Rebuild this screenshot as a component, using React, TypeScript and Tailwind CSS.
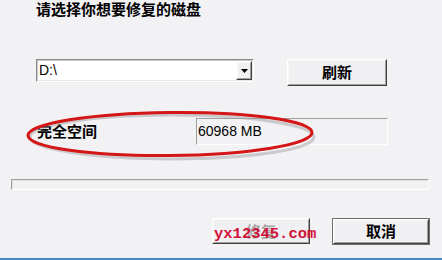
import React from "react";

const cjk = "font-['SimSun','Noto_Sans_CJK_SC',sans-serif]";

function Raised({ children, className = "" }: { children?: React.ReactNode; className?: string }) {
  return (
    <div
      className={`border border-t-white border-l-white border-b-[#404040] border-r-[#404040] bg-[#f0eff2] ${className}`}
    >
      <div className="w-full h-full border border-t-[#f7f7f7] border-l-[#f7f7f7] border-b-[#a0a0a0] border-r-[#a0a0a0] flex items-center justify-center">
        {children}
      </div>
    </div>
  );
}

export default function App() {
  return (
    <div className={`relative w-[442px] h-[260px] bg-[#f2f1f4] overflow-hidden flex flex-col ${cjk}`}>
      <div className="pl-[36px] h-[16px] text-[15px] leading-[17px] font-bold text-black">
        请选择你想要修复的磁盘
      </div>

      <div className="mt-[43px] flex items-start pl-[36px]">
        <div className="w-[218px] h-[23px] border border-t-[#8a8a8a] border-l-[#8a8a8a] border-b-white border-r-white">
          <div className="w-full h-full border border-t-[#c8c8c8] border-l-[#c8c8c8] border-b-[#e8e8e8] border-r-[#e8e8e8] bg-white flex items-center">
            <span className="pl-[1px] text-[14px] font-['Liberation_Sans',sans-serif] text-black">D:\</span>
            <Raised className="ml-auto w-[16px] h-[19px]">
              <svg width="7" height="4" viewBox="0 0 7 4">
                <path d="M0 0h7L3.5 4z" fill="#000" />
              </svg>
            </Raised>
          </div>
        </div>
        <Raised className="ml-[33px] w-[100px] h-[27px]">
          <span className="text-[15px] font-bold text-black">刷新</span>
        </Raised>
      </div>

      <div className="mt-[32px] flex items-center pl-[37px]">
        <div className="w-[159px] text-[15px] font-bold text-black leading-[15px] -mt-[2px]">完全空间</div>
        <div className="w-[192px] h-[27px] border border-t-[#a0a0a0] border-l-[#a0a0a0] border-b-white border-r-white">
          <div className="pl-[1px] pt-[2px] text-[14px] font-['Liberation_Sans',sans-serif] text-black">60968 MB</div>
        </div>
      </div>

      <div className="mt-[34px] ml-[11px] w-[418px] h-[11px] border border-t-[#a0a0a0] border-l-[#a0a0a0] border-b-white border-r-white">
        <div className="w-full h-full border border-t-[#e0e0e0] border-l-[#e0e0e0] border-b-transparent border-r-transparent" />
      </div>

      <div className="mt-[28px] flex items-start pl-[212px]">
        <Raised className="w-[98px] h-[26px]">
          <span className="text-[15px] font-bold text-[#a8a8a8]">修复</span>
        </Raised>
        <div className="ml-[22px] w-[98px] h-[27px] border border-[#6e6e6e]">
          <Raised className="w-full h-full">
            <span className="text-[15px] font-bold text-black">取消</span>
          </Raised>
        </div>
      </div>

      <div className="mt-auto h-[2px] bg-[#4b86c0]" />

      <svg className="absolute left-0 top-0" width="442" height="260" viewBox="0 0 442 260">
        <ellipse cx="172" cy="137" rx="142" ry="22" fill="none" stroke="#9a9a9a" strokeOpacity="0.45" strokeWidth="3" />
        <ellipse cx="170" cy="134" rx="142" ry="21.5" fill="none" stroke="#d41616" strokeWidth="3" transform="rotate(-0.6 170 134)" />
      </svg>

      <div className="absolute left-[214px] top-[226px] text-[15.5px] leading-[16px] font-bold text-[#d0143a] font-['Liberation_Mono',monospace]">
        yx12345.com
      </div>
    </div>
  );
}
